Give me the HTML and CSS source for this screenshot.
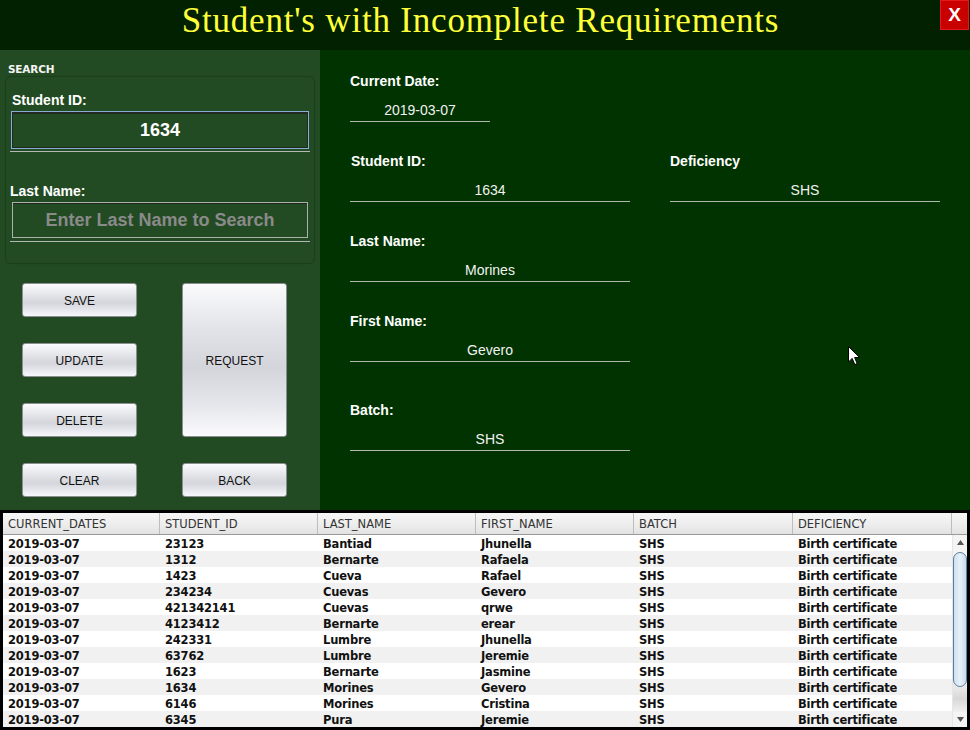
FILE: index.html
```html
<!DOCTYPE html>
<html>
<head>
<meta charset="utf-8">
<link rel="stylesheet" href="styles.css">
</head>
<body>
<div class="app">
  <header class="titlebar">
    <h1 class="title">Student's with Incomplete Requirements</h1>
    <div class="close">X</div>
  </header>
  <div class="main">
    <aside class="left">
      <div class="search-caption">SEARCH</div>
      <div class="search-box">
        <div class="s-label">Student ID:</div>
        <div class="s-field focus">1634</div>
        <div class="s-rule"></div>
        <div class="s-label s-label2">Last Name:</div>
        <div class="s-field placeholder">Enter Last Name to Search</div>
        <div class="s-rule"></div>
      </div>
      <div class="buttons">
        <div class="btn b-save">SAVE</div>
        <div class="btn b-request">REQUEST</div>
        <div class="btn b-update">UPDATE</div>
        <div class="btn b-delete">DELETE</div>
        <div class="btn b-clear">CLEAR</div>
        <div class="btn b-back">BACK</div>
      </div>
    </aside>
    <section class="right">
      <div class="field date">
        <div class="f-label">Current Date:</div>
        <div class="f-value">2019-03-07</div>
      </div>
      <div class="cols">
        <div class="col1">
          <div class="field">
            <div class="f-label">Student ID:</div>
            <div class="f-value">1634</div>
          </div>
          <div class="field">
            <div class="f-label">Last Name:</div>
            <div class="f-value">Morines</div>
          </div>
          <div class="field">
            <div class="f-label">First Name:</div>
            <div class="f-value">Gevero</div>
          </div>
          <div class="field batch">
            <div class="f-label">Batch:</div>
            <div class="f-value">SHS</div>
          </div>
        </div>
        <div class="col2">
          <div class="field">
            <div class="f-label">Deficiency</div>
            <div class="f-value">SHS</div>
          </div>
        </div>
      </div>
      <svg class="cursor" width="13" height="20" viewBox="0 0 13 20">
        <path d="M0.5 0.5 L0.5 16 L4.2 12.4 L6.8 18.6 L9.2 17.6 L6.6 11.5 L11.6 11.5 Z" fill="#fff" stroke="#000" stroke-width="1"/>
      </svg>
    </section>
  </div>
  <div class="table">
    <div class="thead">
      <div class="th">CURRENT_DATES</div>
      <div class="th">STUDENT_ID</div>
      <div class="th">LAST_NAME</div>
      <div class="th">FIRST_NAME</div>
      <div class="th">BATCH</div>
      <div class="th">DEFICIENCY</div>
      <div class="th th-corner"></div>
    </div>
    <div class="tbody">
      <div class="rows">
        <div class="tr"><span>2019-03-07</span><span>23123</span><span>Bantiad</span><span>Jhunella</span><span>SHS</span><span>Birth certificate</span></div>
        <div class="tr"><span>2019-03-07</span><span>1312</span><span>Bernarte</span><span>Rafaela</span><span>SHS</span><span>Birth certificate</span></div>
        <div class="tr"><span>2019-03-07</span><span>1423</span><span>Cueva</span><span>Rafael</span><span>SHS</span><span>Birth certificate</span></div>
        <div class="tr"><span>2019-03-07</span><span>234234</span><span>Cuevas</span><span>Gevero</span><span>SHS</span><span>Birth certificate</span></div>
        <div class="tr"><span>2019-03-07</span><span>421342141</span><span>Cuevas</span><span>qrwe</span><span>SHS</span><span>Birth certificate</span></div>
        <div class="tr"><span>2019-03-07</span><span>4123412</span><span>Bernarte</span><span>erear</span><span>SHS</span><span>Birth certificate</span></div>
        <div class="tr"><span>2019-03-07</span><span>242331</span><span>Lumbre</span><span>Jhunella</span><span>SHS</span><span>Birth certificate</span></div>
        <div class="tr"><span>2019-03-07</span><span>63762</span><span>Lumbre</span><span>Jeremie</span><span>SHS</span><span>Birth certificate</span></div>
        <div class="tr"><span>2019-03-07</span><span>1623</span><span>Bernarte</span><span>Jasmine</span><span>SHS</span><span>Birth certificate</span></div>
        <div class="tr"><span>2019-03-07</span><span>1634</span><span>Morines</span><span>Gevero</span><span>SHS</span><span>Birth certificate</span></div>
        <div class="tr"><span>2019-03-07</span><span>6146</span><span>Morines</span><span>Cristina</span><span>SHS</span><span>Birth certificate</span></div>
        <div class="tr"><span>2019-03-07</span><span>6345</span><span>Pura</span><span>Jeremie</span><span>SHS</span><span>Birth certificate</span></div>
      </div>
      <div class="scrollbar">
        <div class="sb-btn sb-up"><svg width="7" height="5" viewBox="0 0 7 5"><path d="M3.5 0 L7 5 L0 5 Z" fill="#555"/></svg></div>
        <div class="sb-track">
          <div class="sb-thumb"></div>
        </div>
        <div class="sb-btn sb-down"><svg width="7" height="5" viewBox="0 0 7 5"><path d="M0 0 L7 0 L3.5 5 Z" fill="#555"/></svg></div>
      </div>
    </div>
  </div>
</div>
</body>
</html>
```
FILE: styles.css
```css
* { box-sizing: border-box; }
html, body { margin: 0; padding: 0; }
body { width: 970px; height: 730px; overflow: hidden; background: #003300; font-family: "Liberation Sans", Arial, sans-serif; }

.app { width: 970px; height: 730px; display: flex; flex-direction: column; }

.titlebar { position: relative; height: 50px; background: #012101; padding-right: 9px; padding-bottom: 8px; }
.title { margin: 0; font-family: "Liberation Serif", "Times New Roman", serif; font-weight: normal; font-size: 35px; line-height: 42px; letter-spacing: 0.8px; color: #ffff3a; text-align: center; }
.close { position: absolute; top: 0; right: 1px; width: 29px; height: 30px; background: #c80000; border: 1px solid #e41a1a; color: #fff; font-weight: bold; font-size: 19px; line-height: 28px; text-align: center; }

.main { height: 460px; display: flex; }

.left { width: 320px; background: #234b23; padding-top: 12px; }
.search-caption { padding-left: 8px; font-family: "DejaVu Sans", sans-serif; font-weight: bold; font-size: 10.5px; line-height: 14px; color: #f4f4f4; letter-spacing: -0.2px; }
.search-box { margin-left: 5px; width: 310px; height: 188px; border: 1px solid #1b3f1b; border-radius: 6px; padding: 15px 0 0 0; box-shadow: 0 0 1px rgba(0,0,0,0.3); }
.s-label { padding-left: 6px; font-weight: bold; font-size: 14px; line-height: 16px; color: #fff; }
.s-label2 { margin-top: 31px; padding-left: 4px; }
.s-field { margin-top: 3px; margin-left: 5px; width: 298px; height: 38px; text-align: center; font-weight: bold; font-size: 18px; }
.s-field.focus { border: 1px solid #87aed2; box-shadow: inset 1px 2px 0 #202a20, inset -1px -1px 0 #202a20; color: #fff; line-height: 36px; }
.s-field.placeholder { margin-left: 6px; width: 296px; height: 36px; border: 1px solid #aab0aa; box-shadow: inset 0 1px 0 #1e261e; color: #8a8a8a; line-height: 34px; }
.s-rule { margin-top: 2px; margin-left: 4px; width: 300px; height: 1px; background: #b3bab3; }
.s-field.placeholder + .s-rule { margin-top: 3px; }

.buttons { margin-top: 19px; margin-left: 22px; display: grid; grid-template-columns: 115px 105px; grid-template-rows: 34px 34px 34px 34px; column-gap: 45px; row-gap: 26px; }
.btn { border: 1px solid #8c8e92; border-radius: 3px; background: linear-gradient(#fbfbfd, #dcdee3 45%, #d4d6dc 60%, #f6f7fb); display: flex; align-items: center; justify-content: center; padding-top: 1px; font-size: 12px; color: #111; }
.b-save { grid-column: 1; grid-row: 1; }
.b-update { grid-column: 1; grid-row: 2; }
.b-delete { grid-column: 1; grid-row: 3; }
.b-clear { grid-column: 1; grid-row: 4; }
.b-request { grid-column: 2; grid-row: 1 / span 3; background: linear-gradient(#fbfbfd, #e2e3e8 30%, #d3d5db 55%, #e6e7ec 80%, #fbfbfe); }
.b-back { grid-column: 2; grid-row: 4; }

.right { position: relative; flex: 1; background: #003300; padding: 23px 0 0 30px; }
.field { margin-bottom: 31px; }
.f-label { font-weight: bold; font-size: 14px; line-height: 16px; color: #fff; }
.f-value { margin-top: 11px; line-height: 20px; padding-bottom: 1px; border-bottom: 1px solid #b0b8b0; font-size: 14px; color: #f2f2f2; text-align: center; }
.date { width: 140px; }
.cols { display: flex; gap: 40px; }
.col1 { width: 280px; }
.col2 { width: 270px; }
.col1 .field:nth-child(1) .f-label { padding-left: 1px; }
.batch { margin-top: 40px; }
.cursor { position: absolute; left: 528px; top: 296px; }

.table { height: 220px; background: #000; padding: 3px; display: flex; flex-direction: column; }
.thead { height: 22px; display: grid; grid-template-columns: 157px 158px 158px 158px 159px 159px 15px; background: linear-gradient(#f7f7f7, #ececec 60%, #e2e2e2); border-bottom: 1px solid #9a9a9a; }
.th { border-right: 1px solid #bdbdbd; padding-left: 5px; padding-top: 1px; font-family: "DejaVu Sans", sans-serif; font-size: 11.5px; line-height: 20px; color: #333; white-space: nowrap; overflow: hidden; }
.th-corner { border-right: none; }
.tbody { flex: 1; display: flex; overflow: hidden; }
.rows { width: 949px; background: #fff; }
.tr { height: 16px; display: grid; grid-template-columns: 157px 158px 158px 158px 159px 159px; font-family: "DejaVu Sans", sans-serif; font-weight: bold; font-size: 11.5px; letter-spacing: -0.2px; line-height: 14px; color: #111; }
.tr:nth-child(even) { background: #f1f1f1; }
.tr span { padding-left: 5px; padding-top: 2px; white-space: nowrap; }
.scrollbar { width: 15px; background: #f4f4f4; display: flex; flex-direction: column; border-left: 1px solid #e6e6e6; }
.sb-btn { height: 15px; display: flex; align-items: center; justify-content: center; }
.sb-track { flex: 1; padding-top: 2px; background: linear-gradient(#f4f4f4 80%, #d8d8d8 92%, #f0f0f0); }
.sb-thumb { margin-left: 0; width: 14px; height: 135px; border: 1px solid #5c7ea0; border-radius: 7px; background: linear-gradient(90deg, #cfe0ef, #e6f0f8 50%, #c9dbeb); }
```
